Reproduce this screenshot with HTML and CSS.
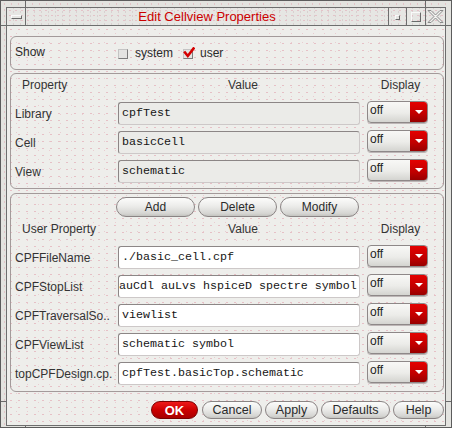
FILE: index.html
```html
<!DOCTYPE html>
<html>
<head>
<meta charset="utf-8">
<link rel="stylesheet" href="styles.css">
</head>
<body>
<div class="window">
  <div class="client">
    <div class="titlebar">
      <div class="tb-btn tb-menu"><span class="menu-bar"></span></div>
      <div class="title">Edit Cellview Properties</div>
      <div class="tb-btn tb-min"><span class="min-box"></span></div>
      <div class="tb-btn tb-max"><span class="max-box"></span></div>
      <div class="tb-btn tb-close">
        <svg width="17" height="13" viewBox="0 0 17 13">
          <path d="M1 0.5 L4 0.5 L8.5 5 L13 0.5 L16 0.5 L10 6.5 L16 12.5 L13 12.5 L8.5 8 L4 12.5 L1 12.5 L7 6.5 Z" fill="#f2f2f0" stroke="#8a8a8a" stroke-width="1"/>
        </svg>
      </div>
    </div>
    <div class="content">
      <div class="group group-show">
        <span class="show-label">Show</span>
        <span class="check"></span>
        <span class="check-text">system</span>
        <span class="check check-on">
          <svg width="12" height="12" viewBox="0 0 12 12"><path d="M2 5.5 L4.8 9 L10.5 1.5" fill="none" stroke="#d40000" stroke-width="2.6" stroke-linecap="square"/></svg>
        </span>
        <span class="check-text">user</span>
      </div>

      <div class="group group-props">
        <div class="grid">
          <div class="hdr hdr-prop">Property</div>
          <div class="hdr hdr-value">Value</div>
          <div class="hdr hdr-disp">Display</div>

          <div class="lbl">Library</div>
          <div class="field field-ro">cpfTest</div>
          <div class="dd"><span class="dd-text">off</span><span class="dd-arrow"><i></i></span></div>

          <div class="lbl">Cell</div>
          <div class="field field-ro">basicCell</div>
          <div class="dd"><span class="dd-text">off</span><span class="dd-arrow"><i></i></span></div>

          <div class="lbl">View</div>
          <div class="field field-ro">schematic</div>
          <div class="dd"><span class="dd-text">off</span><span class="dd-arrow"><i></i></span></div>
        </div>
      </div>

      <div class="group group-user">
        <div class="btn-row">
          <button class="btn btn-mid">Add</button>
          <button class="btn btn-mid">Delete</button>
          <button class="btn btn-mid">Modify</button>
        </div>
        <div class="grid">
          <div class="hdr hdr-prop">User Property</div>
          <div class="hdr hdr-value">Value</div>
          <div class="hdr hdr-disp">Display</div>

          <div class="lbl">CPFFileName</div>
          <div class="field">./basic_cell.cpf</div>
          <div class="dd"><span class="dd-text">off</span><span class="dd-arrow"><i></i></span></div>

          <div class="lbl">CPFStopList</div>
          <div class="field field-scrolled">auCdl auLvs hspiceD spectre symbol</div>
          <div class="dd"><span class="dd-text">off</span><span class="dd-arrow"><i></i></span></div>

          <div class="lbl">CPFTraversalSo..</div>
          <div class="field">viewlist</div>
          <div class="dd"><span class="dd-text">off</span><span class="dd-arrow"><i></i></span></div>

          <div class="lbl">CPFViewList</div>
          <div class="field">schematic symbol</div>
          <div class="dd"><span class="dd-text">off</span><span class="dd-arrow"><i></i></span></div>

          <div class="lbl">topCPFDesign.cp.</div>
          <div class="field">cpfTest.basicTop.schematic</div>
          <div class="dd"><span class="dd-text">off</span><span class="dd-arrow"><i></i></span></div>
        </div>
      </div>

      <div class="footer">
        <button class="btn btn-ok">OK</button>
        <button class="btn btn-cancel">Cancel</button>
        <button class="btn btn-apply">Apply</button>
        <button class="btn btn-defaults">Defaults</button>
        <button class="btn btn-help">Help</button>
      </div>
    </div>
  </div>
</div>
</body>
</html>
```
FILE: styles.css
```css
* { box-sizing: border-box; }

body {
  margin: 0;
  width: 452px;
  height: 428px;
  overflow: hidden;
  font-family: "Liberation Sans", Arial, sans-serif;
  font-size: 12px;
  color: #2a2a2a;
}

.window {
  width: 452px;
  height: 428px;
  border: 1px solid #5c5c5c;
  padding: 6px 5px 1px 5px;
  background:
    linear-gradient(#6a6a6a, #6a6a6a) 24px 0 / 1px 6px no-repeat,
    linear-gradient(#6a6a6a, #6a6a6a) 424px 0 / 1px 6px no-repeat,
    linear-gradient(#6a6a6a, #6a6a6a) 0 24px / 5px 1px no-repeat,
    linear-gradient(#6a6a6a, #6a6a6a) 445px 24px / 5px 1px no-repeat,
    linear-gradient(#6a6a6a, #6a6a6a) 0 400px / 5px 1px no-repeat,
    linear-gradient(#6a6a6a, #6a6a6a) 445px 400px / 5px 1px no-repeat,
    linear-gradient(#6a6a6a, #6a6a6a) 24px 425px / 1px 2px no-repeat,
    linear-gradient(#6a6a6a, #6a6a6a) 424px 425px / 1px 2px no-repeat,
    radial-gradient(circle, #e2c4c8 0.7px, transparent 1.1px) 0 0 / 7px 6px,
    #e3e3df;
}

.client {
  height: 100%;
  border: 1px solid #6e6e6e;
  display: flex;
  flex-direction: column;
}

.titlebar {
  height: 18px;
  flex: none;
  display: flex;
  border-bottom: 1px solid #6e6e6e;
  background:
    radial-gradient(circle, #e4c2c8 0.7px, transparent 1.1px) 0 0 / 6px 5px,
    radial-gradient(circle, #d9d0d0 0.7px, transparent 1.1px) 3px 2px / 7px 4px,
    #e6e6e3;
}

.tb-btn {
  display: flex;
  align-items: center;
  justify-content: center;
}

.tb-menu {
  width: 19px;
  border-right: 1px solid #6e6e6e;
}

.menu-bar {
  width: 11px;
  height: 4px;
  border: 1px solid;
  border-color: #fafafa #6a6a6a #6a6a6a #fafafa;
  background: #e6e6e3;
  margin-top: 1px;
}

.title {
  flex: 1;
  text-align: center;
  color: #cc0000;
  font-size: 13px;
  line-height: 17px;
}

.tb-min {
  width: 18px;
  border-left: 1px solid #6e6e6e;
}

.min-box {
  width: 5px;
  height: 5px;
  border: 1px solid;
  border-color: #fafafa #6a6a6a #6a6a6a #fafafa;
  margin-top: 1px;
}

.tb-max {
  width: 19px;
  border-left: 1px solid #6e6e6e;
}

.max-box {
  width: 10px;
  height: 10px;
  border: 1px solid;
  border-color: #fafafa #6a6a6a #6a6a6a #fafafa;
}

.tb-close {
  width: 20px;
  border-left: 1px solid #6e6e6e;
}

.content {
  flex: 1;
  padding: 10px 1px 0 3px;
  display: flex;
  flex-direction: column;
  background:
    radial-gradient(circle, #e6c0c6 0.7px, transparent 1.1px) 0 0 / 8px 7px,
    radial-gradient(circle, #e9cdd1 0.6px, transparent 1px) 4px 3px / 11px 9px,
    #eeeeeb;
}

.group {
  border: 1px solid #a39a9a;
  border-radius: 6px;
  flex: none;
}

.group-show {
  height: 34px;
  display: flex;
  align-items: center;
  padding-left: 4px;
}

.show-label {
  width: 103px;
  margin-top: -3px;
}

.check {
  width: 10px;
  height: 10px;
  border: 1px solid;
  border-color: #c4c4c4 #7c7c7c #7c7c7c #c4c4c4;
  background: #e4e4e2;
  position: relative;
  margin-top: 2px;
}

.check svg {
  position: absolute;
  left: -1px;
  top: -3px;
}

.check-text {
  margin-left: 7px;
  margin-right: 10px;
}

.group-props {
  margin-top: 3px;
  height: 116px;
  padding: 4px 0 0 4px;
}

.group-user {
  margin-top: 4px;
  height: 199px;
  padding: 3px 0 0 4px;
}

.grid {
  display: grid;
  grid-template-columns: 96px 242px 61px;
  grid-template-rows: 18px;
  grid-auto-rows: 23px;
  column-gap: 7px;
  row-gap: 6px;
  align-items: center;
}

.group-user .grid {
  margin-top: 5px;
}

.hdr {
  height: 14px;
  line-height: 14px;
  align-self: start;
  color: #333;
}

.hdr-prop { padding-left: 7px; white-space: nowrap; }
.hdr-value { text-align: center; padding-left: 8px; }
.hdr-disp { text-align: center; padding-left: 6px; }

.lbl {
  white-space: nowrap;
  color: #333;
}

.field {
  height: 23px;
  border: 1px solid;
  border-color: #8c8686 #cdc8c8 #cdc8c8 #8c8686;
  border-radius: 3px;
  background: #ffffff;
  font-family: "Liberation Mono", "Courier New", monospace;
  font-size: 11.67px;
  line-height: 21px;
  padding-left: 3px;
  color: #151515;
  white-space: nowrap;
  overflow: hidden;
}

.field-ro {
  background: #ebebe8;
}

.field-scrolled {
  padding-left: 0;
}

.dd {
  align-self: start;
  margin-top: -1px;
  height: 22px;
  display: flex;
  border: 1px solid #8e8888;
  border-radius: 4px;
  overflow: hidden;
  background: linear-gradient(#f8f8f6, #ecece9 55%, #d4d4d0);
  box-shadow: 0 1px 0 #bdb6b6;
}

.dd-text {
  flex: 1;
  padding-left: 2px;
  line-height: 17px;
  color: #222;
}

.dd-arrow {
  width: 17px;
  background: linear-gradient(#e40000, #c00000 60%, #980000);
  display: flex;
  align-items: center;
  justify-content: center;
}

.dd-arrow i {
  width: 0;
  height: 0;
  border-left: 4px solid transparent;
  border-right: 4px solid transparent;
  border-top: 4px solid #ffffff;
}

.btn-row {
  display: flex;
  gap: 3px;
  padding-left: 101px;
}

.btn {
  height: 20px;
  padding: 0;
  border: 1px solid #8a8484;
  border-radius: 10px;
  background: linear-gradient(#fcfcfb, #ececea 45%, #d6d6d3 85%, #c4c4c0);
  font-family: "Liberation Sans", Arial, sans-serif;
  font-size: 12px;
  color: #2a2a2a;
  line-height: 17px;
}

.btn-mid { width: 79px; }

.footer {
  margin-top: 9px;
  display: flex;
  justify-content: flex-end;
  gap: 3px;
}

.footer .btn {
  height: 18px;
  line-height: 15px;
  font-size: 12.5px;
}

.footer .btn-ok {
  width: 47px;
  margin-right: 1px;
  border-color: #7a0000;
  background: linear-gradient(#ee1a1a, #cc0000 50%, #a80000);
  color: #ffffff;
  font-weight: bold;
  font-size: 13px;
}

.btn-cancel { width: 60px; }
.btn-apply { width: 53px; }
.btn-defaults { width: 69px; }
.btn-help { width: 51px; }
```
